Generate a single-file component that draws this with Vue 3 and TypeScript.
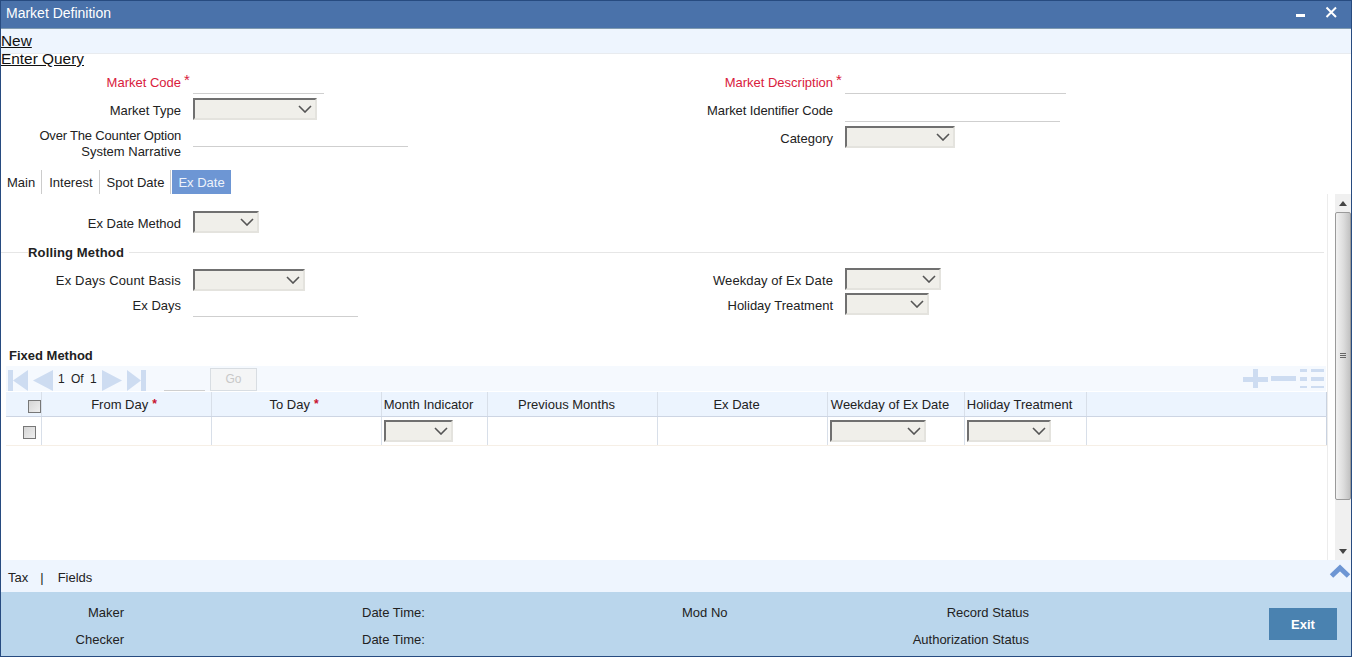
<script setup lang="ts">
interface Col { label: string; width: number; req?: boolean }
const cols: Col[] = [
  { label: 'From Day', width: 170, req: true },
  { label: 'To Day', width: 170, req: true },
  { label: 'Month Indicator', width: 106 },
  { label: 'Previous Months', width: 170 },
  { label: 'Ex Date', width: 170 },
  { label: 'Weekday of Ex Date', width: 137 },
  { label: 'Holiday Treatment', width: 122 },
  { label: '', width: 240 },
]
const selects: Record<string, number> = { 'Month Indicator': 69, 'Weekday of Ex Date': 96, 'Holiday Treatment': 84 }
</script>

<template>
  <div class="win">
    <header class="title">
      <span class="ttext">Market Definition</span>
      <svg class="winbtns" width="52" height="20" viewBox="0 0 52 20">
        <rect x="7" y="11" width="9" height="3" fill="#fff" />
        <path d="M37.5 4.5 L47 14 M47 4.5 L37.5 14" stroke="#fff" stroke-width="2" fill="none" />
      </svg>
    </header>
    <nav class="toolbar">
      <a class="tlink">New</a>
      <a class="tlink">Enter Query</a>
    </nav>

    <section class="head">
      <div class="col">
        <div class="row r1">
          <label class="lab red">Market Code<i class="star">*</i></label>
          <span class="line" style="width: 131px"></span>
        </div>
        <div class="row r2">
          <label class="lab">Market Type</label>
          <span class="sel" style="width: 124px"><svg class="chev" width="14" height="8" viewBox="0 0 14 8"><path d="M1 1 L7 7 L13 1" fill="none" stroke="#555" stroke-width="1.6" /></svg></span>
        </div>
        <div class="row r3">
          <label class="lab two"><span class="tight">Over The Counter Option</span><br />System Narrative</label>
          <span class="line l3" style="width: 215px"></span>
        </div>
      </div>
      <div class="col">
        <div class="row r1">
          <label class="lab red">Market Description<i class="star">*</i></label>
          <span class="line" style="width: 221px"></span>
        </div>
        <div class="row r2b">
          <label class="lab"><span class="tight2">Market Identifier Code</span></label>
          <span class="line" style="width: 215px"></span>
        </div>
        <div class="row r3b">
          <label class="lab">Category</label>
          <span class="sel" style="width: 110px"><svg class="chev" width="14" height="8" viewBox="0 0 14 8"><path d="M1 1 L7 7 L13 1" fill="none" stroke="#555" stroke-width="1.6" /></svg></span>
        </div>
      </div>
    </section>

    <div class="tabs">
      <span class="tab">Main</span>
      <span class="tab">Interest</span>
      <span class="tab">Spot Date</span>
      <span class="tab on">Ex Date</span>
    </div>

    <div class="body">
      <main class="scroll">
        <div class="scrollin">
          <div class="row exm">
            <label class="lab">Ex Date Method</label>
            <span class="sel" style="width: 66px"><svg class="chev" width="14" height="8" viewBox="0 0 14 8"><path d="M1 1 L7 7 L13 1" fill="none" stroke="#555" stroke-width="1.6" /></svg></span>
          </div>
          <div class="legend"><b>Rolling Method</b></div>
          <div class="rolling">
            <div class="col">
              <div class="row rb1">
                <label class="lab"><span class="wide">Ex Days Count Basis</span></label>
                <span class="sel" style="width: 112px"><svg class="chev" width="14" height="8" viewBox="0 0 14 8"><path d="M1 1 L7 7 L13 1" fill="none" stroke="#555" stroke-width="1.6" /></svg></span>
              </div>
              <div class="row rb2">
                <label class="lab">Ex Days</label>
                <span class="line" style="width: 165px"></span>
              </div>
            </div>
            <div class="col">
              <div class="row rb3">
                <label class="lab"><span class="wide2">Weekday of Ex Date</span></label>
                <span class="sel" style="width: 96px"><svg class="chev" width="14" height="8" viewBox="0 0 14 8"><path d="M1 1 L7 7 L13 1" fill="none" stroke="#555" stroke-width="1.6" /></svg></span>
              </div>
              <div class="row rb4">
                <label class="lab">Holiday Treatment</label>
                <span class="sel" style="width: 84px"><svg class="chev" width="14" height="8" viewBox="0 0 14 8"><path d="M1 1 L7 7 L13 1" fill="none" stroke="#555" stroke-width="1.6" /></svg></span>
              </div>
            </div>
          </div>
          <h3 class="fixed">Fixed Method</h3>
          <div class="gridbar">
            <svg width="140" height="26" viewBox="0 0 140 26" class="nav">
              <g fill="#cddcf1">
                <rect x="2" y="3" width="5" height="21" />
                <path d="M7 13.5 L22 3 V24 Z" />
                <path d="M27 13.5 L47 3 V24 Z" />
                <path d="M96 3 L116 13.5 L96 24 Z" />
                <path d="M121 3 L135 13.5 L121 24 Z" />
                <rect x="135" y="3" width="5" height="21" />
              </g>
            </svg>
            <span class="pages">1 Of 1</span>
            <span class="pageinput"></span>
            <span class="go">Go</span>
            <svg class="tools" width="83" height="19" viewBox="0 0 83 19">
              <g fill="#cddcf1">
                <rect x="0" y="8" width="25" height="5" />
                <rect x="10" y="0" width="5" height="19" />
                <rect x="28" y="7" width="25" height="5" />
                <rect x="57" y="0" width="7" height="3" />
                <rect x="68" y="0" width="13" height="3" />
                <rect x="57" y="8" width="7" height="4" />
                <rect x="68" y="8" width="13" height="4" />
                <rect x="57" y="17" width="7" height="2" />
                <rect x="68" y="17" width="13" height="2" />
              </g>
            </svg>
          </div>
          <div class="table">
            <div class="thead">
              <div class="cell chk"><span class="box hbox"></span></div>
              <div v-for="c in cols" :key="c.label" class="cell" :class="{ reqc: c.req }" :style="{ width: c.width + 'px' }">
                {{ c.label }}<i v-if="c.req" class="rq">*</i>
              </div>
            </div>
            <div class="trow">
              <div class="cell chk"><span class="box rbox"></span></div>
              <div v-for="c in cols" :key="c.label" class="cell" :style="{ width: c.width + 'px' }">
                <span v-if="selects[c.label]" class="sel tsel" :style="{ width: selects[c.label] + 'px' }"><svg class="chev" width="14" height="8" viewBox="0 0 14 8"><path d="M1 1 L7 7 L13 1" fill="none" stroke="#555" stroke-width="1.6" /></svg></span>
              </div>
            </div>
          </div>
        </div>
      </main>
      <aside class="sbar">
        <span class="sbtn sup"><svg width="8" height="5" viewBox="0 0 8 5"><path d="M4 0 L8 5 H0 Z" fill="#444" /></svg></span>
        <span class="thumb"><span class="grip"></span></span>
        <span class="strack"></span>
        <span class="sbtn"><svg width="8" height="5" viewBox="0 0 8 5"><path d="M4 5 L8 0 H0 Z" fill="#444" /></svg></span>
      </aside>
    </div>

    <div class="subbar">
      <span>Tax</span><span class="pipe">|</span><span>Fields</span>
      <svg class="up" width="22" height="14" viewBox="0 0 22 14"><path d="M2.5 12 L11 4 L19.5 12" fill="none" stroke="#6d96d4" stroke-width="5" /></svg>
    </div>

    <footer class="foot">
      <div class="fcol f1"><span>Maker</span><span>Checker</span></div>
      <div class="fcol f2"><span>Date Time:</span><span>Date Time:</span></div>
      <div class="fcol f3"><span>Mod No</span><span>&nbsp;</span></div>
      <div class="fcol f4"><span>Record Status</span><span>Authorization Status</span></div>
      <button class="exit">Exit</button>
    </footer>
  </div>
</template>

<style>
html, body { margin: 0; background: #fff; overflow: hidden; }
</style>

<style scoped>
.win {
  box-sizing: border-box;
  width: 1352px;
  height: 657px;
  border: 1px solid #274b80;
  display: flex;
  flex-direction: column;
  font: 13px "Liberation Sans", Arial, sans-serif;
  color: #222;
  background: #fff;
  overflow: hidden;
}
.title {
  height: 27px;
  flex: none;
  background: #4a72aa;
  border-bottom: 1px solid #7f9ab0;
  color: #fff;
  font-size: 14px;
  display: flex;
  align-items: center;
  justify-content: space-between;
  padding-left: 5px;
}
.ttext { padding-bottom: 3px; }
.winbtns { margin: -4px 10px 0 0; }
.toolbar {
  height: 24px;
  flex: none;
  background: #eef5fe;
  border-bottom: 1px solid #e8ebef;
}
.tlink {
  display: table;
  font-size: 15.4px;
  line-height: 18px;
  color: #111;
  text-decoration: underline;
}
.toolbar .tlink:first-child { padding-top: 3px; }
.head {
  display: flex;
  height: 116px;
  flex: none;
}
.col { width: 652px; flex: none; }
.row { display: flex; align-items: flex-end; }
.lab {
  width: 180px;
  margin-right: 12px;
  text-align: right;
  flex: none;
  position: relative;
  line-height: 16px;
}
.red { color: #d9203c; }
.star {
  position: absolute;
  left: 183px;
  top: -3px;
  font-style: normal;
  font-size: 15px;
  color: #d9203c;
}
.tight { letter-spacing: -0.18px; }
.tight2 { letter-spacing: -0.09px; }
.wide { letter-spacing: 0.16px; }
.wide2 { letter-spacing: 0.1px; }
.line { display: block; height: 1px; background: #cfcfcf; flex: none; }
.sel {
  box-sizing: border-box;
  display: flex;
  align-items: center;
  justify-content: flex-end;
  height: 22px;
  flex: none;
  background: #f0efea;
  border: 2px solid #e4e3de;
  border-top-color: #707070;
  border-left-color: #707070;
  padding-right: 3px;
}
.r1 { height: 40px; }
.r1 .lab { margin-bottom: 3px; }
.r2 { height: 22px; margin-top: 4px; align-items: center; }
.r3 { margin-top: 7px; height: 32px; align-items: flex-start; }
.r3 .lab { margin-top: 1px; }
.l3 { margin-top: 19px; }
.r2b { height: 22px; margin-top: 6px; }
.r2b .lab { margin-bottom: 3px; }
.r3b { height: 22px; margin-top: 4px; align-items: center; }
.r2 .lab, .r3b .lab, .exm .lab, .rb3 .lab, .rb4 .lab { padding-top: 4px; }
.rb1 .lab { padding-top: 2px; }
.tabs {
  height: 24px;
  flex: none;
  display: flex;
  align-items: stretch;
  padding-left: 6px;
}
.tab {
  padding: 0 6px;
  margin-right: 1px;
  line-height: 25px;
  border-right: 1px solid #ccc;
}
.tab:first-child { padding-left: 0; }
.tab.on {
  background: #6d96d4;
  color: #eef3fb;
  border-right: 0;
  padding: 0 6px;
}
.body { flex: 1; min-height: 0; display: flex; }
.scroll { flex: 1; min-width: 0; }
.scrollin {
  box-sizing: border-box;
  width: 1327px;
  height: 100%;
  border-right: 1px solid #ececec;
  overflow: hidden;
  padding-top: 17px;
}
.exm { height: 22px; align-items: center; }
.legend {
  margin: 11px 3px 0 0;
  height: 16px;
  position: relative;
  padding-left: 27px;
  display: flex;
  align-items: center;
}
.legend::before {
  content: "";
  position: absolute;
  left: 0; right: 0; top: 8px;
  height: 1px;
  background: #e6e6e6;
}
.legend b { background: #fff; position: relative; padding-right: 5px; letter-spacing: 0.15px; }
.rolling { display: flex; height: 78px; margin-top: 9px; }
.rb1 { height: 22px; align-items: center; }
.rb2 { height: 26px; }
.rb2 .lab { margin-bottom: 3px; }
.rb3 { height: 22px; margin-top: -1px; align-items: center; }
.rb4 { height: 22px; margin-top: 3px; align-items: center; }
.fixed { font-size: 13px; margin: 0; height: 16px; line-height: 18px; padding-left: 8px; }
.gridbar {
  margin: 3px 0 0 5px;
  width: 1320px;
  height: 25px;
  background: #f5f9fe;
  display: flex;
  align-items: center;
  position: relative;
}
.nav { position: absolute; left: 0; top: 1px; }
.pages { margin-left: 52px; width: 106px; flex: none; font-size: 12px; word-spacing: 3px; }
.pageinput { width: 41px; height: 1px; background: #cfcfcf; align-self: flex-end; flex: none; }
.go {
  box-sizing: border-box;
  width: 47px; height: 23px;
  margin-left: 5px;
  flex: none;
  border: 1px solid #d8dde2;
  background: #f4f5f6;
  color: #c8c8c8;
  font-size: 12px;
  text-align: center;
  line-height: 21px;
  align-self: flex-end;
}
.tools { margin-left: auto; flex: none; }
.table { margin-left: 5px; width: 1322px; }
.thead {
  display: flex;
  margin-top: 1px;
  height: 25px;
  background: #ecf4fe;
  border-bottom: 1px solid #cdd5e3;
  box-sizing: border-box;
}
.trow {
  display: flex;
  height: 29px;
  box-sizing: border-box;
  border-bottom: 1px solid #f6efe6;
}
.cell {
  box-sizing: border-box;
  border-right: 1px solid #d8dfe9;
  display: flex;
  align-items: center;
  justify-content: center;
  flex: none;
  white-space: nowrap;
}
.thead .cell { padding-right: 12px; }
.thead .cell.reqc { padding-right: 5px; }
.thead .cell.chk { padding-right: 0; }
.cell:last-child { border-right: 1px solid #c9d2e0; }
.chk { width: 36px; }
.trow .cell { justify-content: flex-start; padding-left: 2px; }
.trow .chk { padding-left: 17px; }
.thead .chk { justify-content: flex-start; padding-left: 22px; }
.box {
  box-sizing: border-box;
  width: 13px; height: 13px;
  border: 1px solid #777;
  background: linear-gradient(135deg, #d5d5d5, #efefef);
}
.hbox { margin-top: 5px; }
.rbox { margin-top: 2px; }
.rq { font-style: normal; color: #c8102e; margin-left: 4px; font-weight: bold; font-size: 12px; }
.sbar {
  width: 16px;
  flex: none;
  display: flex;
  flex-direction: column;
  background: #f0f0f0;
  box-sizing: border-box;
}
.sbtn {
  height: 17px;
  flex: none;
  display: flex;
  align-items: center;
  justify-content: center;
}
.sup { height: 18px; }
.thumb {
  box-sizing: border-box;
  height: 288px;
  flex: none;
  border: 1px solid #9a9a9a;
  border-radius: 2px;
  background: linear-gradient(90deg, #f2f2f2, #dcdcdc 55%, #c2c2c2);
  display: flex;
  align-items: center;
  justify-content: center;
}
.grip {
  width: 6px; height: 6px;
  background: repeating-linear-gradient(180deg, #666 0 1px, transparent 1px 2px);
}
.strack { flex: 1; }
.subbar {
  height: 32px;
  flex: none;
  background: #eef5fe;
  display: flex;
  align-items: center;
  padding-left: 7px;
  padding-top: 2px;
  box-sizing: border-box;
}
.pipe { margin: 0 14px 0 12px; }
.up { margin-left: auto; margin-top: -12px; }
.foot {
  height: 64px;
  flex: none;
  background: #bad6ec;
  display: flex;
  align-items: flex-start;
  padding-top: 7px;
  box-sizing: border-box;
}
.fcol { display: flex; flex-direction: column; line-height: 27px; flex: none; }
.f1 { width: 123px; align-items: flex-end; }
.f2 { margin-left: 238px; width: 100px; }
.f3 { margin-left: 220px; width: 100px; }
.f4 { width: 327px; margin-left: -80px; align-items: flex-end; text-align: right; }
.foot .fcol span { white-space: nowrap; }
.exit {
  margin-left: auto;
  margin-right: 14px;
  margin-top: 9px;
  width: 68px;
  height: 32px;
  background: #4a82b0;
  border: 0;
  color: #fff;
  font: bold 13px "Liberation Sans", Arial, sans-serif;
}
</style>
